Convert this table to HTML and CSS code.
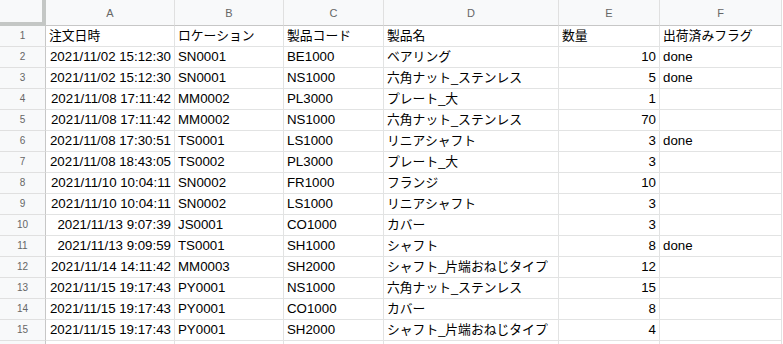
FILE: index.html
```html
<!DOCTYPE html>
<html lang="ja">
<head>
<meta charset="utf-8">
<link rel="stylesheet" href="styles.css">
</head>
<body>
<div class="sheet">
  <div class="row head">
    <div class="c rh corner"></div>
    <div class="c ch">A</div><div class="c ch">B</div><div class="c ch">C</div><div class="c ch">D</div><div class="c ch">E</div><div class="c ch">F</div>
  </div>
  <div class="row"><div class="c rh">1</div><div class="c j">注文日時</div><div class="c j">ロケーション</div><div class="c j">製品コード</div><div class="c j">製品名</div><div class="c j">数量</div><div class="c j">出荷済みフラグ</div></div>
  <div class="row"><div class="c rh">2</div><div class="c r">2021/11/02 15:12:30</div><div class="c">SN0001</div><div class="c">BE1000</div><div class="c j">ベアリング</div><div class="c r">10</div><div class="c">done</div></div>
  <div class="row"><div class="c rh">3</div><div class="c r">2021/11/02 15:12:30</div><div class="c">SN0001</div><div class="c">NS1000</div><div class="c j">六角ナット_ステンレス</div><div class="c r">5</div><div class="c">done</div></div>
  <div class="row"><div class="c rh">4</div><div class="c r">2021/11/08 17:11:42</div><div class="c">MM0002</div><div class="c">PL3000</div><div class="c j">プレート_大</div><div class="c r">1</div><div class="c"></div></div>
  <div class="row"><div class="c rh">5</div><div class="c r">2021/11/08 17:11:42</div><div class="c">MM0002</div><div class="c">NS1000</div><div class="c j">六角ナット_ステンレス</div><div class="c r">70</div><div class="c"></div></div>
  <div class="row"><div class="c rh">6</div><div class="c r">2021/11/08 17:30:51</div><div class="c">TS0001</div><div class="c">LS1000</div><div class="c j">リニアシャフト</div><div class="c r">3</div><div class="c">done</div></div>
  <div class="row"><div class="c rh">7</div><div class="c r">2021/11/08 18:43:05</div><div class="c">TS0002</div><div class="c">PL3000</div><div class="c j">プレート_大</div><div class="c r">3</div><div class="c"></div></div>
  <div class="row"><div class="c rh">8</div><div class="c r">2021/11/10 10:04:11</div><div class="c">SN0002</div><div class="c">FR1000</div><div class="c j">フランジ</div><div class="c r">10</div><div class="c"></div></div>
  <div class="row"><div class="c rh">9</div><div class="c r">2021/11/10 10:04:11</div><div class="c">SN0002</div><div class="c">LS1000</div><div class="c j">リニアシャフト</div><div class="c r">3</div><div class="c"></div></div>
  <div class="row"><div class="c rh">10</div><div class="c r">2021/11/13 9:07:39</div><div class="c">JS0001</div><div class="c">CO1000</div><div class="c j">カバー</div><div class="c r">3</div><div class="c"></div></div>
  <div class="row"><div class="c rh">11</div><div class="c r">2021/11/13 9:09:59</div><div class="c">TS0001</div><div class="c">SH1000</div><div class="c j">シャフト</div><div class="c r">8</div><div class="c">done</div></div>
  <div class="row"><div class="c rh">12</div><div class="c r">2021/11/14 14:11:42</div><div class="c">MM0003</div><div class="c">SH2000</div><div class="c j">シャフト_片端おねじタイプ</div><div class="c r">12</div><div class="c"></div></div>
  <div class="row"><div class="c rh">13</div><div class="c r">2021/11/15 19:17:43</div><div class="c">PY0001</div><div class="c">NS1000</div><div class="c j">六角ナット_ステンレス</div><div class="c r">15</div><div class="c"></div></div>
  <div class="row"><div class="c rh">14</div><div class="c r">2021/11/15 19:17:43</div><div class="c">PY0001</div><div class="c">CO1000</div><div class="c j">カバー</div><div class="c r">8</div><div class="c"></div></div>
  <div class="row"><div class="c rh">15</div><div class="c r">2021/11/15 19:17:43</div><div class="c">PY0001</div><div class="c">SH2000</div><div class="c j">シャフト_片端おねじタイプ</div><div class="c r">4</div><div class="c"></div></div>
  <div class="row"><div class="c rh"></div><div class="c"></div><div class="c"></div><div class="c"></div><div class="c"></div><div class="c"></div><div class="c"></div></div>
</div>
</body>
</html>
```
FILE: styles.css
```css
html, body {
  margin: 0;
  padding: 0;
  background: #ffffff;
  overflow: hidden;
}
.sheet {
  font-family: "Liberation Sans", Arial, "Noto Sans CJK JP", sans-serif;
  font-size: 13.3px;
  color: #000;
  width: 782px;
  height: 344px;
  overflow: hidden;
}
.row {
  display: grid;
  grid-template-columns: 46px 129px 109px 100px 175px 101px 122px;
  height: 21px;
}
.row.head {
  height: 26px;
}
.c {
  box-sizing: border-box;
  border-right: 1px solid #e2e3e3;
  border-bottom: 1px solid #e2e3e3;
  padding: 0 3px;
  white-space: nowrap;
  overflow: hidden;
  display: flex;
  align-items: center;
  line-height: 20px;
}
.c.j {
  font-size: 12.8px;
}
.c.r {
  justify-content: flex-end;
}
.rh {
  background: #f8f9fa;
  color: #666;
  font-size: 10px;
  justify-content: center;
  border-right: 1px solid #c7c7c7;
  border-bottom: 1px solid #e0e0e0;
}
.head .c {
  border-bottom: 1px solid #c7c7c7;
}
.ch {
  background: #f8f9fa;
  color: #666;
  font-size: 11px;
  justify-content: center;
  border-right: 1px solid #e0e0e0;
}
.head .c.corner {
  border-right: 4px solid #c4c7c5;
  border-bottom: 4px solid #c4c7c5;
}
```
